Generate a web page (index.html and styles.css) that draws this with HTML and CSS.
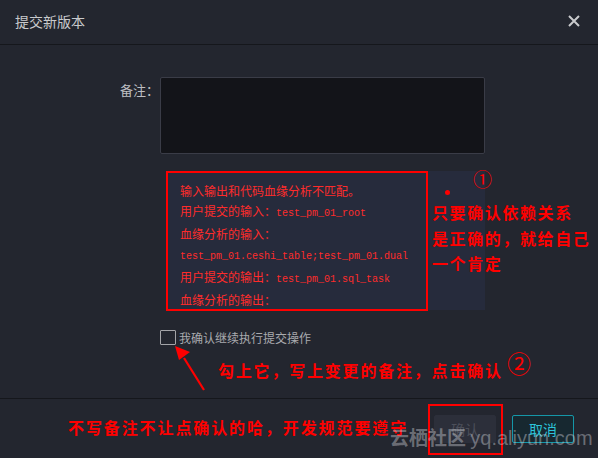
FILE: index.html
```html
<!DOCTYPE html>
<html lang="zh-CN">
<head>
    <meta charset="UTF-8">
    <meta name="viewport" content="width=device-width, initial-scale=1.0">
    <title>提交新版本</title>
    <link rel="stylesheet" href="styles.css">
</head>
<body>
    <div class="dialog">
        <div class="dialog-header">
            <div class="title">提交新版本</div>
            <button class="close-btn" aria-label="关闭">
                <svg width="12" height="12" viewBox="0 0 12 12">
                    <path d="M1 1 L11 11 M11 1 L1 11" stroke="#c9cacd" stroke-width="2" fill="none"/>
                </svg>
            </button>
        </div>

        <div class="dialog-body">
            <div class="form-row">
                <label class="form-label">备注：</label>
                <textarea class="remark"></textarea>
            </div>

            <div class="check-panel">
                <div class="mismatch">
                    <div>输入输出和代码血缘分析不匹配。</div>
                    <div>用户提交的输入：<span class="code">test_pm_01_root</span></div>
                    <div>血缘分析的输入：</div>
                    <div><span class="code">test_pm_01.ceshi_table;test_pm_01.dual</span></div>
                    <div>用户提交的输出：<span class="code">test_pm_01.sql_task</span></div>
                    <div>血缘分析的输出：</div>
                </div>
            </div>

            <div class="confirm-row">
                <span class="checkbox"></span>
                <span class="confirm-text">我确认继续执行提交操作</span>
            </div>
        </div>

        <div class="dialog-footer">
            <button class="btn btn-ok" disabled>确认</button>
            <button class="btn btn-cancel">取消</button>
        </div>

        <!-- annotations drawn on top of the screenshot -->
        <div class="mark num-1">①</div>
        <div class="mark dot"></div>
        <div class="mark note note-1">只要确认依赖关系<br>是正确的，就给自己<br>一个肯定</div>
        <svg class="mark arrow" width="40" height="50" viewBox="0 0 40 50">
            <path d="M31 44 L11 12" stroke="#f00" stroke-width="2.2" fill="none"/>
            <polygon points="2,0 17,6 6,14" fill="#f00"/>
        </svg>
        <div class="mark note note-2">勾上它，写上变更的备注，点击确认</div>
        <div class="mark num-2">②</div>
        <div class="mark note note-3">不写备注不让点确认的哈，开发规范要遵守</div>
        <div class="mark ok-box"></div>
        <div class="mark watermark"><b>云栖社区</b> <span class="site">yq.aliyun.com</span></div>
    </div>
</body>
</html>
```

FILE: styles.css
```css
* {
    margin: 0;
    padding: 0;
    box-sizing: border-box;
    font-family: "Noto Sans CJK SC", sans-serif;
}

body {
    background-color: #23262f;
    color: #c9cacd;
    width: 598px;
    height: 458px;
    overflow: hidden;
}

.dialog {
    position: relative;
    width: 598px;
    height: 458px;
    background: #23262f;
}

.dialog-header {
    height: 45px;
    display: flex;
    justify-content: space-between;
    align-items: center;
    padding: 0 18px 2px 15px;
    border-bottom: 1px solid #15171c;
}

.dialog-header .title {
    font-size: 14px;
    color: #c9cacd;
}

.close-btn {
    background: none;
    border: none;
    width: 12px;
    height: 12px;
    display: flex;
}

.dialog-body {
    height: 353px;
    padding-top: 32px;
}

.form-row {
    display: flex;
}

.form-label {
    width: 160px;
    text-align: right;
    padding: 4px 1px 0 0;
    font-size: 13px;
    line-height: 18px;
    color: #bdbec2;
}

.remark {
    width: 325px;
    height: 77px;
    background: #131419;
    border: 1px solid #3a3c47;
    border-radius: 2px;
    resize: none;
    outline: none;
}

.check-panel {
    margin: 17px 0 0 166px;
    width: 319px;
    height: 139px;
    background: #262b3c;
}

.mismatch {
    width: 262px;
    height: 140px;
    margin-top: 1px;
    border: 2px solid #f00;
    padding: 8px 0 0 12px;
    color: #ff2b2b;
    font-size: 12px;
    line-height: 20px;
}

.mismatch .code {
    font-family: "Liberation Mono", monospace;
    font-size: 10px;
}

.confirm-row {
    display: flex;
    align-items: center;
    margin: 19px 0 0 160px;
}

.checkbox {
    width: 16px;
    height: 15px;
    border: 1px solid #a3a4a8;
    border-radius: 1px;
}

.confirm-text {
    margin-left: 3px;
    font-size: 12px;
    color: #a9aaae;
}

.dialog-footer {
    height: 60px;
    border-top: 1px solid #15171c;
    display: flex;
    justify-content: flex-end;
    gap: 16px;
    padding: 16px 24px 0 0;
}

.btn {
    width: 62px;
    height: 28px;
    font-size: 14px;
    border-radius: 2px;
}

.btn-ok {
    background: #2c2f3a;
    color: #4c4f5a;
    border: 1px solid #2c2f3a;
}

.btn-cancel {
    background: #172830;
    color: #2cc3da;
    border: 1px solid #1597a8;
}

/* annotations */
.mark {
    position: absolute;
    color: #f00;
}

.note {
    font-weight: bold;
    font-size: 16px;
    letter-spacing: 1.6px;
    white-space: nowrap;
}

.num-1 {
    left: 473px;
    top: 169px;
    font-size: 19px;
    line-height: 22px;
    font-family: "DejaVu Serif", serif;
}

.dot {
    left: 445px;
    top: 190px;
    width: 5px;
    height: 5px;
    border-radius: 50%;
    background: #f00;
}

.note-1 {
    left: 432px;
    top: 200px;
    line-height: 25.5px;
}

.arrow {
    left: 173px;
    top: 346px;
}

.note-2 {
    left: 218px;
    top: 359px;
    line-height: 22px;
    letter-spacing: 1.8px;
}

.num-2 {
    left: 507px;
    top: 352px;
    font-size: 24px;
    line-height: 26px;
    font-family: "DejaVu Serif", serif;
}

.note-3 {
    left: 68px;
    top: 416px;
    line-height: 22px;
    letter-spacing: 1.9px;
}

.ok-box {
    left: 428px;
    top: 404px;
    width: 75px;
    height: 51px;
    border: 2px solid #f00;
}

.watermark {
    left: 390px;
    top: 424px;
    font-size: 19px;
    line-height: 26px;
    color: rgba(210, 212, 218, 0.42);
    white-space: nowrap;
}

.watermark b {
    font-weight: bold;
}

.watermark .site {
    font-family: "Liberation Sans", sans-serif;
    font-size: 20px;
}
```
